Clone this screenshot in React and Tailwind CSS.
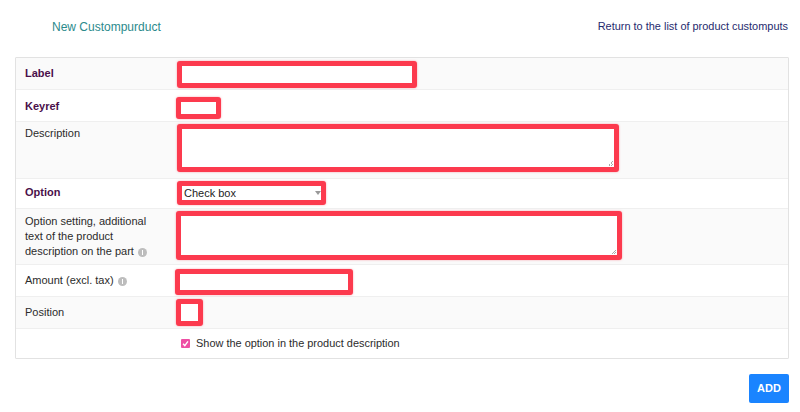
const boxClass =
  "block bg-white border-[5px] border-[#fc3a4e] rounded-[3px] shadow-[0_0_2px_rgba(252,58,78,0.5)] outline-none";

const gripClass =
  "absolute right-[1px] bottom-[1px] w-[5px] h-[5px] bg-[linear-gradient(135deg,transparent_50%,#aaa_50%,#aaa_60%,transparent_60%,transparent_75%,#aaa_75%,#aaa_85%,transparent_85%)]";

function InfoDot() {
  return (
    <span className="inline-flex w-[9px] h-[9px] rounded-full bg-[#bdbdbd] items-center justify-center align-[0px] ml-[4px]">
      <span className="block w-[1px] h-[5px] bg-white" />
    </span>
  );
}

function Row({ label, bold, h, tint, last, labelTop, children }) {
  return (
    <div
      className={`flex ${h} ${tint ? "bg-[#fafafa]" : "bg-white"} ${
        last ? "" : "border-b border-[#efefef]"
      }`}
    >
      <div
        className={`w-[159px] shrink-0 pl-[9px] pr-[14px] leading-[15px] ${labelTop} ${
          bold ? "font-bold text-[#4a0f4a]" : "text-[#2b2b2b]"
        }`}
      >
        {label}
      </div>
      <div className="flex-1 min-w-0">{children}</div>
    </div>
  );
}

export default function App() {
  return (
    <div className="w-[800px] h-[412px] overflow-hidden bg-white text-[11px] font-['Liberation_Sans',Arial,sans-serif]">
      {/* Header */}
      <div className="flex justify-between items-center pt-[15px] pl-[52px] pr-[12px] h-[57px] pb-[19px]">
        <span className="text-[12px] text-[#2b8a8c]">New Custompurduct</span>
        <a className="text-[#1f2a6e] text-[10.95px]">Return to the list of product customputs</a>
      </div>

      {/* Form */}
      <div className="mx-[15px] w-[774px] border border-[#e2e2e2] rounded-[1px]">
        <Row label="Label" bold tint h="h-[32px]" labelTop="pt-[8px]">
          <div className={`${boxClass} w-[240px] h-[27px] ml-[2px] mt-[3px]`} />
        </Row>
        <Row label="Keyref" bold h="h-[32px]" labelTop="pt-[9px]">
          <div className={`${boxClass} w-[45px] h-[22px] ml-[1px] mt-[7px]`} />
        </Row>
        <Row label="Description" tint h="h-[57px]" labelTop="pt-[4px]">
          <div className={`relative ${boxClass} w-[442px] h-[48px] ml-[2px] mt-[2px]`}>
            <span className={gripClass} />
          </div>
        </Row>
        <Row label="Option" bold h="h-[30px]" labelTop="pt-[6px]">
          <div className={`relative ${boxClass} w-[149px] h-[24px] ml-[2px] mt-[2px] text-[11px] leading-[14px] text-[#1c1c1c] pl-[2px]`}>
            Check box
            <span className="absolute right-[0px] top-[5px] w-0 h-0 border-x-[3px] border-x-transparent border-t-[4px] border-t-[#999]" />
          </div>
        </Row>
        <Row
          label={
            <>
              Option setting, additional text of the product description on the part
              <InfoDot />
            </>
          }
          tint
          h="h-[56px]"
          labelTop="pt-[5px]"
        >
          <div className={`relative ${boxClass} w-[446px] h-[49px] ml-[1px] mt-[2px]`}>
            <span className={gripClass} />
          </div>
        </Row>
        <Row
          label={
            <>
              Amount (excl. tax)
              <InfoDot />
            </>
          }
          h="h-[32px]"
          labelTop="pt-[8px]"
        >
          <div className={`${boxClass} w-[178px] h-[26px] mt-[4px]`} />
        </Row>
        <Row label="Position" tint h="h-[32px]" labelTop="pt-[8px]">
          <div className={`${boxClass} w-[27px] h-[27px] ml-[1px] mt-[2px]`} />
        </Row>
        <Row label="" h="h-[29px]" last labelTop="">
          <div className="flex items-center gap-[6px] ml-[6px] mt-[6px] text-[#2b2b2b]">
            <span className="flex items-center justify-center w-[9px] h-[9px] rounded-[1px] bg-[#ee4fa4]">
              <svg width="7" height="7" viewBox="0 0 10 10" fill="none" stroke="white" strokeWidth="2">
                <path d="M1.5 5.5 L4 8 L8.5 2" />
              </svg>
            </span>
            <span className="text-[10.95px]">Show the option in the product description</span>
          </div>
        </Row>
      </div>

      {/* Footer */}
      <div className="flex justify-end pr-[11px] pt-[15px]">
        <button className="w-[40px] h-[29px] rounded-[2px] bg-[#1a84ff] text-white font-bold text-[11px]">
          ADD
        </button>
      </div>
    </div>
  );
}
